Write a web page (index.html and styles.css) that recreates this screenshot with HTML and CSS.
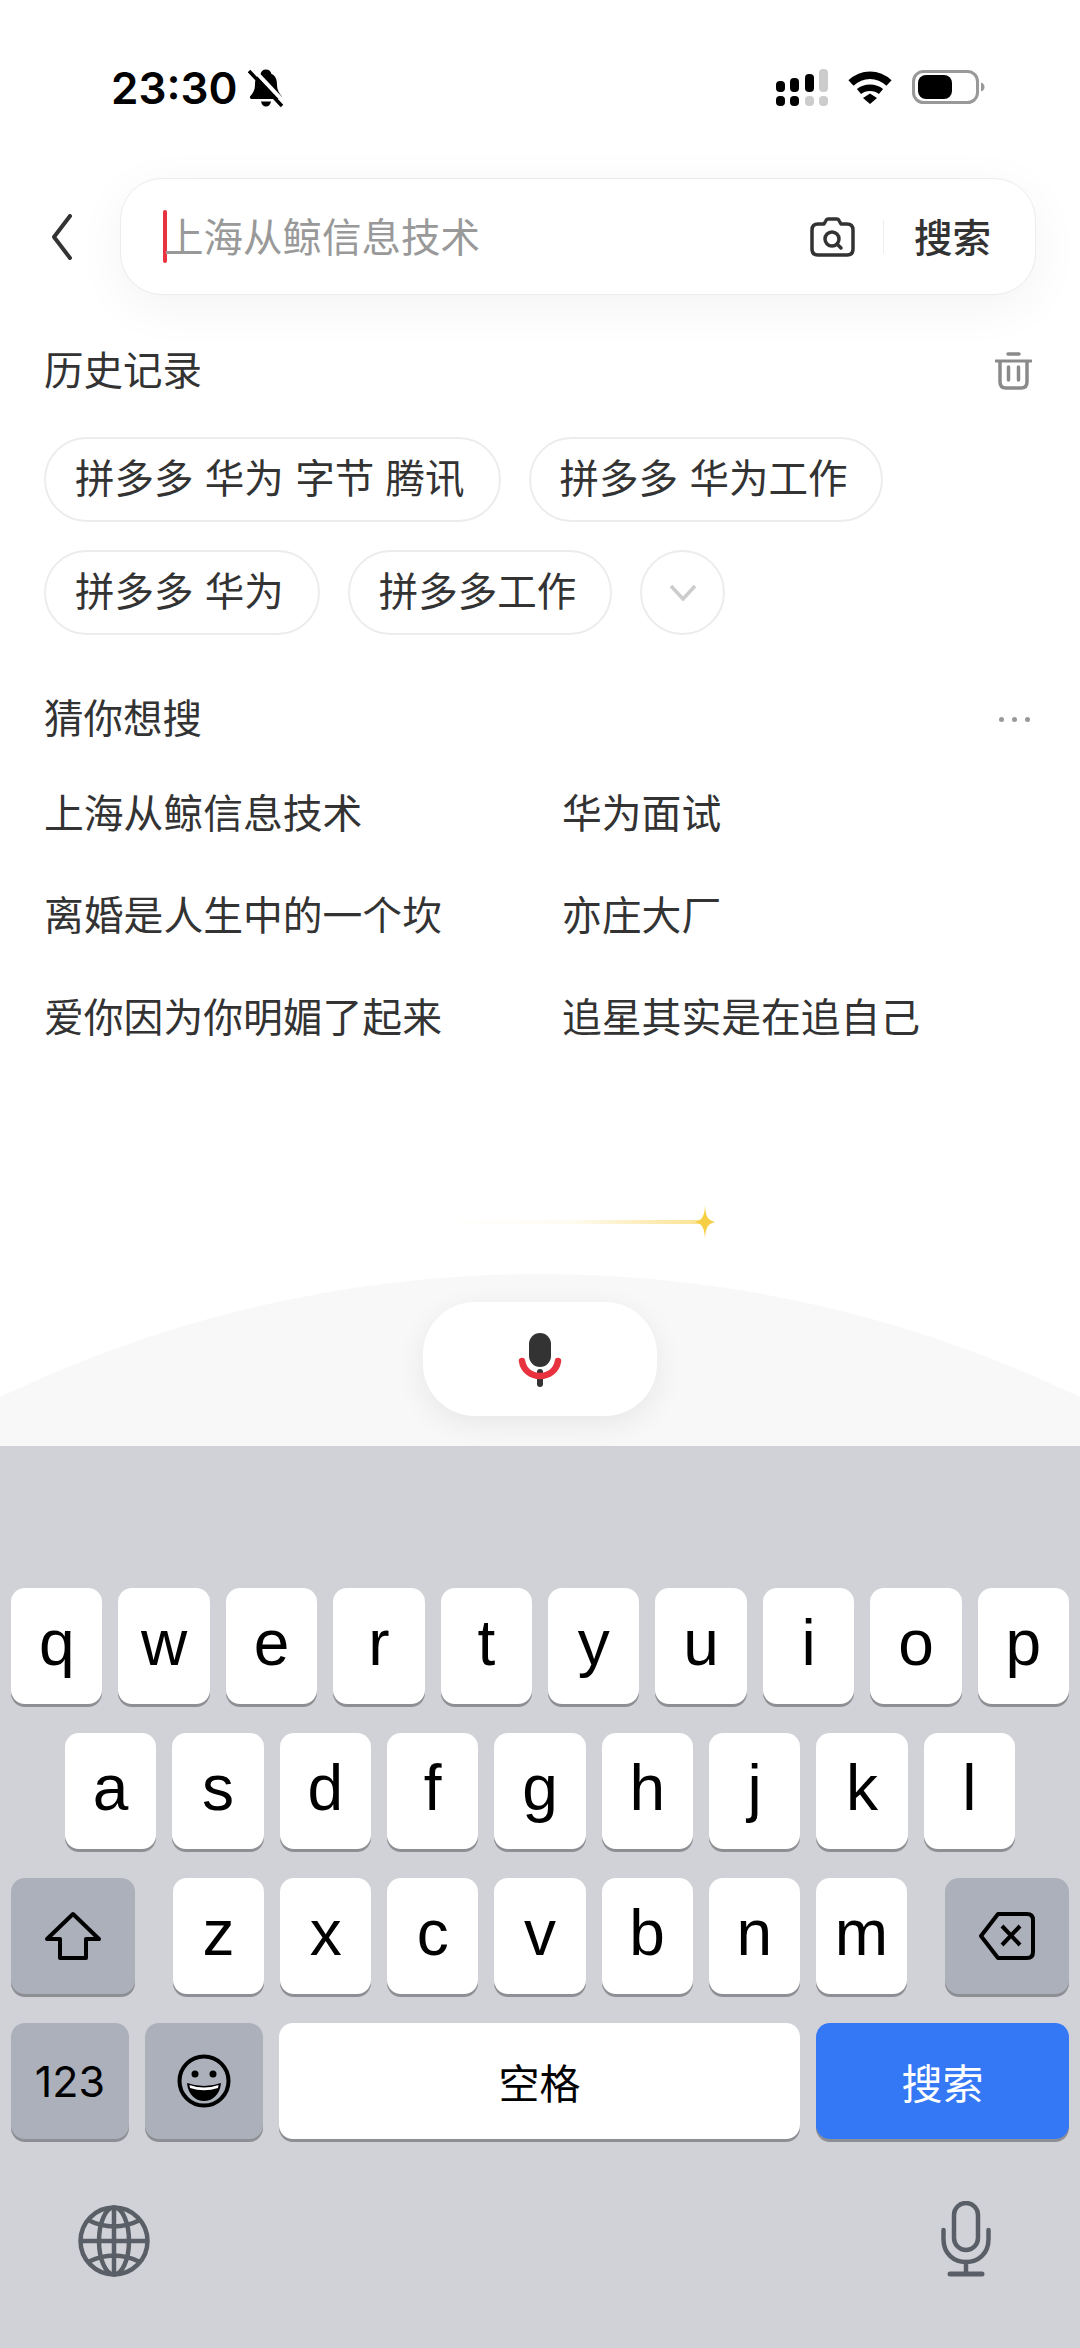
FILE: index.html
```html
<!DOCTYPE html>
<html lang="zh-CN">
<head>
  <meta charset="UTF-8" />
  <meta name="viewport" content="width=device-width, initial-scale=1.0"/>
  <title>搜索</title>
  <link rel="stylesheet" href="styles.css">
</head>
<body>
  <div class="page">
    <div class="status">
      <div class="status-left">
        <span class="time">23:30</span>
        <svg class="bell" viewBox="0 0 36 40" width="36" height="40">
          <path d="M18 1.5C21 1.5 23 3.5 23.5 6C28 8 29 12 29 17C29 22 31 25 34 28.5C34.5 30 33.5 31 32 31H4C2.5 31 1.5 30 2 28.5C5 25 7 22 7 17C7 12 8 8 12.5 6C13 3.5 15 1.5 18 1.5Z" fill="#000"/>
          <path d="M13 33.5H23C22.5 36.5 20.5 38.5 18 38.5C15.5 38.5 13.5 36.5 13 33.5Z" fill="#000"/>
          <path d="M5 1L38 36" stroke="#fff" stroke-width="4"/>
          <path d="M1 3L34 38" stroke="#000" stroke-width="3.5"/>
        </svg>
      </div>
      <div class="status-right">
        <svg viewBox="0 0 52 37" width="52" height="37">
          <rect x="0" y="12" width="9" height="11" rx="4" fill="#000"/>
          <rect x="14" y="9" width="9" height="14" rx="4" fill="#000"/>
          <rect x="29" y="5" width="9" height="18" rx="4" fill="#000"/>
          <rect x="43" y="0" width="9" height="23" rx="4" fill="#ccc"/>
          <rect x="0" y="27" width="9" height="10" rx="4" fill="#000"/>
          <rect x="14" y="27" width="9" height="10" rx="4" fill="#000"/>
          <rect x="29" y="27" width="9" height="10" rx="4" fill="#ccc"/>
          <rect x="43" y="27" width="9" height="10" rx="4" fill="#ccc"/>
        </svg>
        <svg class="wifi" viewBox="0 0 44 33" width="44" height="33">
          <path d="M3 12C14 1.5 30 1.5 41 12" fill="none" stroke="#000" stroke-width="7.5"/>
          <path d="M11 20.5C17 15.5 27 15.5 33 20.5" fill="none" stroke="#000" stroke-width="6.5"/>
          <path d="M15 27L22 22.500L29 27L22 33Z" fill="#000"/>
        </svg>
        <svg class="battery" viewBox="0 0 73 34" width="73" height="34">
          <rect x="1.500" y="1.500" width="64" height="31" rx="10" fill="#fff" stroke="#999" stroke-width="3"/>
          <rect x="6" y="5" width="34" height="24" rx="8" fill="#000"/>
          <path d="M69 12.500C71.500 13 72.500 15 72.500 17C72.500 19 71.500 21 69 21.500Z" fill="#999"/>
        </svg>
      </div>
    </div>

    <div class="search-row">
      <svg class="back" viewBox="0 0 24 46" width="24" height="46">
        <path d="M20 2L4 23L20 44" fill="none" stroke="#333" stroke-width="4" stroke-linecap="round" stroke-linejoin="round"/>
      </svg>
      <div class="search-box">
        <span class="caret"></span>
        <span class="placeholder">上海从鲸信息技术</span>
        <svg class="camera" viewBox="0 0 45 40" width="45" height="40">
          <path d="M14 7L16 3.500Q16.500 2 18 2H27Q28.500 2 29 3.500L31 7H37Q43 7 43 13V32Q43 38 37 38H8Q2 38 2 32V13Q2 7 8 7Z" fill="none" stroke="#333" stroke-width="3.500" stroke-linejoin="round"/>
          <circle cx="22" cy="22" r="7" fill="none" stroke="#333" stroke-width="3.500"/>
          <path d="M27 27L31 31" stroke="#333" stroke-width="3.500" stroke-linecap="round"/>
        </svg>
        <span class="divider"></span>
        <span class="search-btn">搜索</span>
      </div>
    </div>

    <div class="section-head history-head">
      <span class="section-title">历史记录</span>
      <svg class="trash" viewBox="0 0 37 38" width="37" height="38">
        <path d="M13 2H24" stroke="#8a8a8a" stroke-width="3.500" stroke-linecap="round"/>
        <path d="M1 9H36" stroke="#8a8a8a" stroke-width="3" stroke-linecap="round"/>
        <path d="M5 9V30Q5 36 11 36H26Q32 36 32 30V9" fill="none" stroke="#8a8a8a" stroke-width="3.500"/>
        <path d="M13.500 15V28M23.500 15V28" stroke="#8a8a8a" stroke-width="3.500" stroke-linecap="round"/>
      </svg>
    </div>

    <div class="tags">
      <div class="tag-row">
        <span class="tag">拼多多 华为 字节 腾讯</span>
        <span class="tag">拼多多 华为工作</span>
      </div>
      <div class="tag-row">
        <span class="tag">拼多多 华为</span>
        <span class="tag">拼多多工作</span>
        <span class="tag tag-more">
          <svg viewBox="0 0 28 17" width="28" height="17">
            <path d="M2 2L14 15L26 2" fill="none" stroke="#ccc" stroke-width="3.500"/>
          </svg>
        </span>
      </div>
    </div>

    <div class="section-head guess-head">
      <span class="section-title">猜你想搜</span>
      <span class="dots"><i></i><i></i><i></i></span>
    </div>

    <div class="guess-list">
      <span>上海从鲸信息技术</span>
      <span>华为面试</span>
      <span>离婚是人生中的一个坎</span>
      <span>亦庄大厂</span>
      <span>爱你因为你明媚了起来</span>
      <span>追星其实是在追自己</span>
    </div>

    <div class="spark">
      <span class="spark-line"></span>
      <svg class="spark-star" viewBox="0 0 20 34" width="20" height="34">
        <path d="M10 0C10.500 10 12 15 20 17C12 19 10.500 24 10 34C9.500 24 8 19 0 17C8 15 9.500 10 10 0Z" fill="#f7cf45"/>
      </svg>
    </div>

    <div class="voice-panel">
      <div class="voice-btn">
        <svg viewBox="0 0 44 56" width="44" height="56">
          <rect x="11" y="2" width="22" height="34" rx="11" fill="#333"/>
          <rect x="19" y="38" width="6" height="18" rx="3" fill="#333"/>
          <path d="M4 30C7 50 37 50 40 30" fill="none" stroke="#e8323f" stroke-width="6.500" stroke-linecap="round"/>
        </svg>
      </div>
    </div>

    <div class="keyboard">
      <div class="key-row">
        <span class="key">q</span><span class="key">w</span><span class="key">e</span><span class="key">r</span><span class="key">t</span><span class="key">y</span><span class="key">u</span><span class="key">i</span><span class="key">o</span><span class="key">p</span>
      </div>
      <div class="key-row row-mid">
        <span class="key">a</span><span class="key">s</span><span class="key">d</span><span class="key">f</span><span class="key">g</span><span class="key">h</span><span class="key">j</span><span class="key">k</span><span class="key">l</span>
      </div>
      <div class="key-row">
        <span class="key key-fn key-side">
          <svg viewBox="0 0 58 50" width="58" height="50">
            <path d="M29 3L55 28H42V47H16V28H3Z" fill="none" stroke="#000" stroke-width="4" stroke-linejoin="round"/>
          </svg>
        </span>
        <div class="letters">
          <span class="key">z</span><span class="key">x</span><span class="key">c</span><span class="key">v</span><span class="key">b</span><span class="key">n</span><span class="key">m</span>
        </div>
        <span class="key key-fn key-side">
          <svg viewBox="0 0 58 50" width="58" height="50">
            <path d="M20 3H49Q55 3 55 9V41Q55 47 49 47H20L3 25Z" fill="none" stroke="#000" stroke-width="4" stroke-linejoin="round"/>
            <path d="M24 15L42 34M42 15L24 34" stroke="#000" stroke-width="4"/>
          </svg>
        </span>
      </div>
      <div class="key-row">
        <span class="key key-fn key-num">123</span>
        <span class="key key-fn key-num">
          <svg viewBox="0 0 54 54" width="54" height="54">
            <circle cx="27" cy="27" r="24.500" fill="none" stroke="#000" stroke-width="4"/>
            <circle cx="18" cy="20" r="3.500" fill="#000"/>
            <circle cx="36" cy="20" r="3.500" fill="#000"/>
            <path d="M10 29Q27 35 44 29C43 41 35 47 27 47C19 47 11 41 10 29Z" fill="#000"/>
            <path d="M12.500 31Q27 36 41.500 31L41 34Q27 38.500 13 34Z" fill="#fff"/>
          </svg>
        </span>
        <span class="key key-space">空格</span>
        <span class="key key-go">搜索</span>
      </div>
      <div class="kb-bottom">
        <svg viewBox="0 0 72 72" width="72" height="72">
          <g fill="none" stroke="#5a5f67" stroke-width="4.500">
            <circle cx="36" cy="36" r="33.500"/>
            <ellipse cx="36" cy="36" rx="15" ry="33.500"/>
            <path d="M36 2V70M2 36H70"/>
            <path d="M10 15Q36 28 62 15M10 57Q36 44 62 57"/>
          </g>
        </svg>
        <svg viewBox="0 0 50 76" width="50" height="76">
          <g fill="none" stroke="#5a5f67" stroke-width="4.500" stroke-linecap="round">
            <rect x="13" y="2" width="24" height="47" rx="12"/>
            <path d="M2.500 29V38C2.500 53 13 61 25 61C37 61 47.500 53 47.500 38V29"/>
            <path d="M25 61V72"/>
            <path d="M9 73H41" stroke-width="5"/>
          </g>
        </svg>
      </div>
    </div>
  </div>
</body>
</html>
```

FILE: styles.css
```css
:root {
  --text-color: #333;
  --key-bg: #fff;
  --key-fn: #abb0ba;
  --key-shadow: #8e8f94;
  --kb-bg: #d1d2d7;
  --panel-bg: #f8f8f8;
  --border: #ececec;
}

* {
  box-sizing: border-box;
}

body {
  margin: 0;
  background-color: #fff;
  color: var(--text-color);
  font-family: "Noto Sans CJK SC", "Noto Sans", sans-serif;
}

.page {
  width: 1080px;
  height: 2348px;
  display: flex;
  flex-direction: column;
  overflow: hidden;
}

/* status bar */
.status {
  height: 178px;
  flex-shrink: 0;
  padding: 69px 95px 0 111px;
  display: flex;
  justify-content: space-between;
  align-items: flex-start;
  color: #000;
}

.status-left {
  display: flex;
  align-items: center;
  gap: 11px;
  height: 40px;
  margin-top: -1px;
}

.time {
  font-family: Inter, sans-serif;
  font-size: 44px;
  font-weight: 600;
  line-height: 40px;
}

.status-right {
  display: flex;
  align-items: flex-start;
  gap: 20px;
}

.wifi {
  margin-top: 2px;
}

.battery {
  margin-top: 1px;
}

/* search */
.search-row {
  display: flex;
  align-items: center;
  gap: 46px;
  padding: 0 44px 0 50px;
  height: 117px;
  flex-shrink: 0;
}

.search-box {
  flex: 1;
  height: 117px;
  display: flex;
  align-items: center;
  padding: 0 44px 0 42px;
  background-color: #fff;
  border: 1.500px solid var(--border);
  border-radius: 42px;
  box-shadow: 0 12px 50px rgba(0, 0, 0, 0.05);
}

.caret {
  width: 4px;
  height: 53px;
  border-radius: 2px;
  background-color: #e8323f;
}

.placeholder {
  flex: 1;
  margin-left: -3px;
  padding-bottom: 5px;
  font-size: 39.500px;
  color: #999;
}

.divider {
  width: 1px;
  height: 34px;
  margin: 0 30px 0 28px;
  background-color: #eee;
}

.search-btn {
  padding-bottom: 3px;
  font-size: 38.500px;
  font-weight: 500;
  color: var(--text-color);
}

/* section headings */
.section-head {
  display: flex;
  justify-content: space-between;
  align-items: center;
  padding: 0 50px 0 44px;
  height: 56px;
  flex-shrink: 0;
}

.history-head {
  margin-top: 48px;
  padding-right: 48px;
}

.guess-head {
  margin-top: 56px;
}

.section-title {
  margin-bottom: 7px;
  font-size: 39.500px;
  line-height: 56px;
}

.dots {
  display: flex;
  gap: 8px;
}

.dots i {
  width: 5px;
  height: 5px;
  border-radius: 50%;
  background-color: #999;
}

/* history tags */
.tags {
  margin-top: 38px;
  padding-left: 44px;
  display: flex;
  flex-direction: column;
  gap: 28px;
}

.tag-row {
  display: flex;
  gap: 28px;
}

.tag {
  height: 85px;
  padding: 0 34px 9px 29px;
  display: flex;
  align-items: center;
  font-size: 39.500px;
  word-spacing: 2.500px;
  white-space: pre;
  background-color: #fff;
  border: 2px solid var(--border);
  border-radius: 43px;
}

.tag-more {
  width: 85px;
  padding: 0;
  justify-content: center;
}

/* guess list */
.guess-list {
  margin-top: 12px;
  padding-left: 44px;
  display: grid;
  grid-template-columns: 518px 1fr;
  grid-auto-rows: 102px;
  align-items: center;
  font-size: 39.800px;
}

/* sparkle above the voice panel */
.spark {
  margin-top: auto;
  height: 34px;
  padding-right: 365px;
  display: flex;
  justify-content: flex-end;
  align-items: center;
  flex-shrink: 0;
  margin-bottom: 35px;
}

.spark-line {
  width: 260px;
  height: 4px;
  margin-right: -8px;
  background: linear-gradient(to right, rgba(247, 207, 69, 0), rgba(247, 207, 69, 0.08) 50%, rgba(247, 207, 69, 0.6));
}

/* voice panel with the curved top */
.voice-panel {
  position: relative;
  height: 172px;
  flex-shrink: 0;
  padding-top: 28px;
  display: flex;
  justify-content: center;
  align-items: flex-start;
  overflow: hidden;
}

.voice-panel::before {
  content: "";
  position: absolute;
  top: 0;
  left: -707px;
  width: 2494px;
  height: 2494px;
  border-radius: 50%;
  background-color: var(--panel-bg);
}

.voice-btn {
  position: relative;
  width: 234px;
  height: 114px;
  display: flex;
  align-items: center;
  justify-content: center;
  background-color: #fff;
  border-radius: 52px;
  box-shadow: 0 8px 30px rgba(0, 0, 0, 0.07);
}

/* keyboard */
.keyboard {
  height: 902px;
  flex-shrink: 0;
  padding: 142px 11px 0;
  display: flex;
  flex-direction: column;
  gap: 29px;
  background-color: var(--kb-bg);
}

.key-row {
  display: flex;
  gap: 16px;
  height: 116px;
}

.row-mid {
  padding: 0 54px;
}

.letters {
  flex: 1;
  display: flex;
  gap: 16px;
  margin: 0 22px;
}

.key {
  flex: 1;
  display: flex;
  align-items: center;
  justify-content: center;
  padding-bottom: 7px;
  font-family: "Liberation Sans", sans-serif;
  font-size: 64px;
  color: #000;
  background-color: var(--key-bg);
  border-radius: 14px;
  box-shadow: 0 3px 0 var(--key-shadow);
}

.key-fn {
  padding-bottom: 0;
  background-color: var(--key-fn);
}

.key-side {
  flex: 0 0 124px;
}

.key-num {
  flex: 0 0 118px;
  font-family: Inter, sans-serif;
  font-size: 43px;
}

.key-space,
.key-go {
  padding-bottom: 0;
  font-family: "Noto Sans CJK SC", sans-serif;
  font-size: 41px;
}

.key-space {
  flex: 0 0 521px;
}

.key-go {
  flex: 1;
  color: #fff;
  background-color: #3478f6;
}

.kb-bottom {
  margin-top: 33px;
  padding: 0 78px 0 67px;
  display: flex;
  justify-content: space-between;
  align-items: flex-end;
}
```
